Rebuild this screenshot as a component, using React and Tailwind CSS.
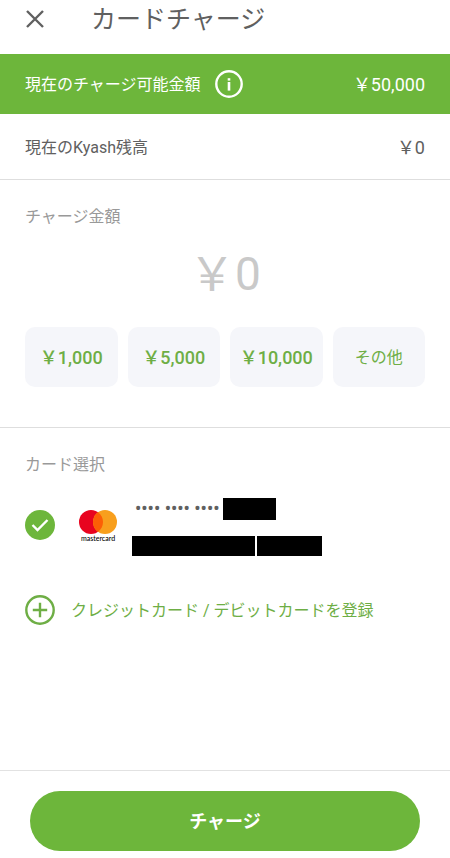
import { useState } from "react";

const GREEN_TEXT = "text-[#6eae45]";

const presets = [
  { id: "1000", label: "￥1,000", className: "text-lg font-medium" },
  { id: "5000", label: "￥5,000", className: "text-lg font-medium" },
  { id: "10000", label: "￥10,000", className: "text-lg font-medium" },
  { id: "other", label: "その他", className: "text-base" },
];

function InfoIcon() {
  return (
    <svg width="28" height="28" viewBox="0 0 28 28" fill="none" aria-hidden="true">
      <circle cx="14" cy="14" r="12.7" stroke="currentColor" strokeWidth="2.4" />
      <rect x="12.7" y="8.2" width="2.6" height="2.4" fill="currentColor" />
      <rect x="12.7" y="12" width="2.6" height="8.6" fill="currentColor" />
    </svg>
  );
}

function MastercardLogo() {
  return (
    <span className="flex w-10 flex-col items-center">
      <svg width="38" height="24" viewBox="0 0 38 24" aria-hidden="true">
        <circle cx="12" cy="12" r="12" fill="#e8041f" />
        <circle cx="26" cy="12" r="12" fill="#f89f1d" />
        <path d="M19 2.25a12 12 0 0 1 0 19.5a12 12 0 0 1 0-19.5Z" fill="#fc5f06" />
      </svg>
      <span className="font-[Lato,sans-serif] text-[7px] leading-[8px] font-medium text-black">
        mastercard
      </span>
    </span>
  );
}

export default function App() {
  const [amount, setAmount] = useState("0");

  return (
    <main className="flex min-h-screen flex-col bg-white font-[Roboto,'Noto_Sans_CJK_JP',sans-serif] text-[#606060]" lang="ja">
      <header className="flex h-[54px] items-center gap-[46px] px-[25px] pb-[14px]">
        <button type="button" aria-label="閉じる" className="flex size-5 items-center justify-center">
          <svg width="20" height="20" viewBox="0 0 20 20" fill="none" aria-hidden="true">
            <path d="M2 1L18 17M18 1L2 17" stroke="currentColor" strokeWidth="2.4" />
          </svg>
        </button>
        <h1 className="text-[25px] leading-8">カードチャージ</h1>
      </header>

      <section className="flex h-[60px] items-center bg-[#6db63b] px-[25px] text-white">
        <span className="pt-[2px] text-base">現在のチャージ可能金額</span>
        <button type="button" aria-label="詳細" className="ml-[14px]">
          <InfoIcon />
        </button>
        <span className="ml-auto pt-[2px] text-lg">￥50,000</span>
      </section>

      <section className="flex h-[66px] items-center justify-between border-b border-[#dedede] px-[25px] pt-[2px]">
        <span className="text-base">現在のKyash残高</span>
        <span className="text-lg">￥0</span>
      </section>

      <section className="border-b border-[#dedede] px-[25px] pt-[25px] pb-10">
        <h2 className="text-base leading-6 text-[#999999]">チャージ金額</h2>
        <output className="mt-[15px] block text-center text-[46px] leading-[60px] text-[#c9c9c9]">
          ￥{amount}
        </output>
        <div className="mt-[23px] grid grid-cols-4 gap-[10px]">
          {presets.map((preset) => (
            <button
              key={preset.id}
              type="button"
              onClick={() => preset.id !== "other" && setAmount(Number(preset.id).toLocaleString())}
              className={`h-[60px] rounded-[10px] bg-[#f5f6fa] pt-[2px] whitespace-nowrap ${GREEN_TEXT} ${preset.className}`}
            >
              {preset.label}
            </button>
          ))}
        </div>
      </section>

      <section className="px-[25px] pt-[25px] pb-10">
        <h2 className="text-base leading-6 text-[#999999]">カード選択</h2>
        <label className="mt-[21px] flex items-start">
          <span className="mt-3 grid size-[30px] shrink-0 place-items-center">
            <input
              type="radio"
              name="card"
              defaultChecked
              aria-label="Mastercard"
              className="col-start-1 row-start-1 size-[30px] appearance-none rounded-full bg-[#6db63b]"
            />
            <svg className="pointer-events-none z-10 col-start-1 row-start-1" width="18" height="14" viewBox="0 0 18 14" fill="none" aria-hidden="true">
              <path d="M1.5 7L6.5 12L16.5 2" stroke="white" strokeWidth="2.4" />
            </svg>
          </span>
          <span className="mt-3 ml-[23px]">
            <MastercardLogo />
          </span>
          <span className="ml-[14px] flex flex-col gap-4">
            <span className="flex items-center gap-1 pl-[3px] text-lg leading-[22px] font-medium">
              •••• •••• ••••
              <span className="h-[22px] w-[53px] bg-black" />
            </span>
            <span className="flex gap-[2px]">
              <span className="h-5 w-[123px] bg-black" />
              <span className="h-5 w-[65px] bg-black" />
            </span>
          </span>
        </label>

        <button type="button" className={`mt-[39px] flex items-center gap-4 ${GREEN_TEXT}`}>
          <svg width="30" height="30" viewBox="0 0 30 30" fill="none" aria-hidden="true">
            <circle cx="15" cy="15" r="13.7" stroke="currentColor" strokeWidth="2.4" />
            <path d="M15 7.8V22.2M7.8 15H22.2" stroke="currentColor" strokeWidth="2.4" />
          </svg>
          <span className="pt-[2px] text-base">クレジットカード / デビットカードを登録</span>
        </button>
      </section>

      <footer className="mt-auto border-t border-[#e2e2e2] px-[30px] pt-5 pb-[7px]">
        <button type="button" className="h-[60px] w-full rounded-full bg-[#6db63b] pt-[2px] text-lg font-bold text-white">
          チャージ
        </button>
      </footer>
    </main>
  );
}
